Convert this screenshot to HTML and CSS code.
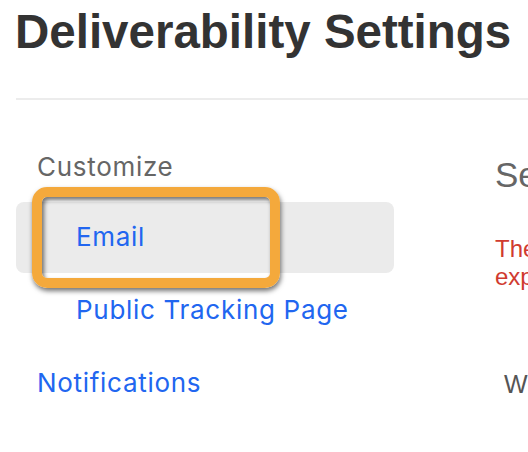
FILE: index.html
```html
<!DOCTYPE html>
<html lang="en">
<head>
<meta charset="utf-8">
<title>Deliverability Settings</title>
<link rel="stylesheet" href="styles.css">
</head>
<body>
<div class="page">
  <header class="page-header">
    <h1 class="page-title">Deliverability Settings</h1>
  </header>
  <div class="layout">
    <nav class="sidebar">
      <div class="group-title">Customize</div>
      <a class="nav-item active" href="#">Email<span class="callout"></span></a>
      <a class="nav-item" href="#">Public Tracking Page</a>
      <a class="group-title link" href="#">Notifications</a>
    </nav>
    <main class="content">
      <h2 class="content-title">Sender Settings</h2>
      <p class="warning">The sender domain for your account has not been verified, or it has<br>expired. Please verify it again.</p>
      <div class="field-label">When a shipment is delivered</div>
    </main>
  </div>
</div>
</body>
</html>
```
FILE: styles.css
```css
html, body {
  margin: 0;
  padding: 0;
  background: #ffffff;
}

.page {
  width: 528px;
  height: 452px;
  overflow: hidden;
  padding-left: 16px;
  box-sizing: border-box;
}

.page-header {
  border-bottom: 2px solid #ececec;
  padding-top: 4px;
  padding-bottom: 39px;
  width: 700px;
}

.page-title {
  margin: 0 0 0 -1px;
  font-family: "Liberation Sans", Arial, sans-serif;
  font-weight: 700;
  font-size: 47.5px;
  line-height: 55px;
  color: #333333;
  white-space: nowrap;
}

.layout {
  display: flex;
  gap: 101px;
  width: 1000px;
}

.sidebar {
  width: 378px;
  flex: none;
  display: flex;
  flex-direction: column;
  padding-top: 49px;
  font-family: Inter, "Noto Sans", sans-serif;
  font-size: 26px;
  line-height: 36px;
  letter-spacing: 0.7px;
}

.group-title {
  padding-left: 21px;
  color: #666666;
  margin-bottom: 17px;
  text-decoration: none;
}

.group-title.link {
  color: #2166f0;
  margin-top: 19px;
  margin-bottom: 0;
}

.nav-item {
  position: relative;
  display: block;
  padding: 19px 0 18px 60px;
  color: #2166f0;
  text-decoration: none;
  border-radius: 8px;
}

.nav-item.active {
  background: #ebebeb;
  padding-top: 17px;
}

.callout {
  position: absolute;
  left: 16px;
  top: -15px;
  width: 248px;
  height: 101px;
  box-sizing: border-box;
  border: 10px solid #f4a93c;
  border-radius: 15px;
  box-shadow: 1px 3px 5px rgba(0, 0, 0, 0.55), inset 2px 3px 4px rgba(0, 0, 0, 0.55);
  pointer-events: none;
}

.content {
  flex: none;
  width: 720px;
  padding-top: 55px;
  font-family: "Liberation Sans", Arial, sans-serif;
}

.content-title {
  margin: 0;
  font-weight: 400;
  font-size: 35px;
  line-height: 40px;
  color: #666666;
  white-space: nowrap;
}

.warning {
  margin: 40px 0 0;
  font-size: 24px;
  line-height: 27.6px;
  color: #d03b30;
  white-space: nowrap;
}

.field-label {
  margin-top: 80px;
  padding-left: 9px;
  font-size: 25px;
  line-height: 29px;
  color: #555555;
  white-space: nowrap;
}
```
